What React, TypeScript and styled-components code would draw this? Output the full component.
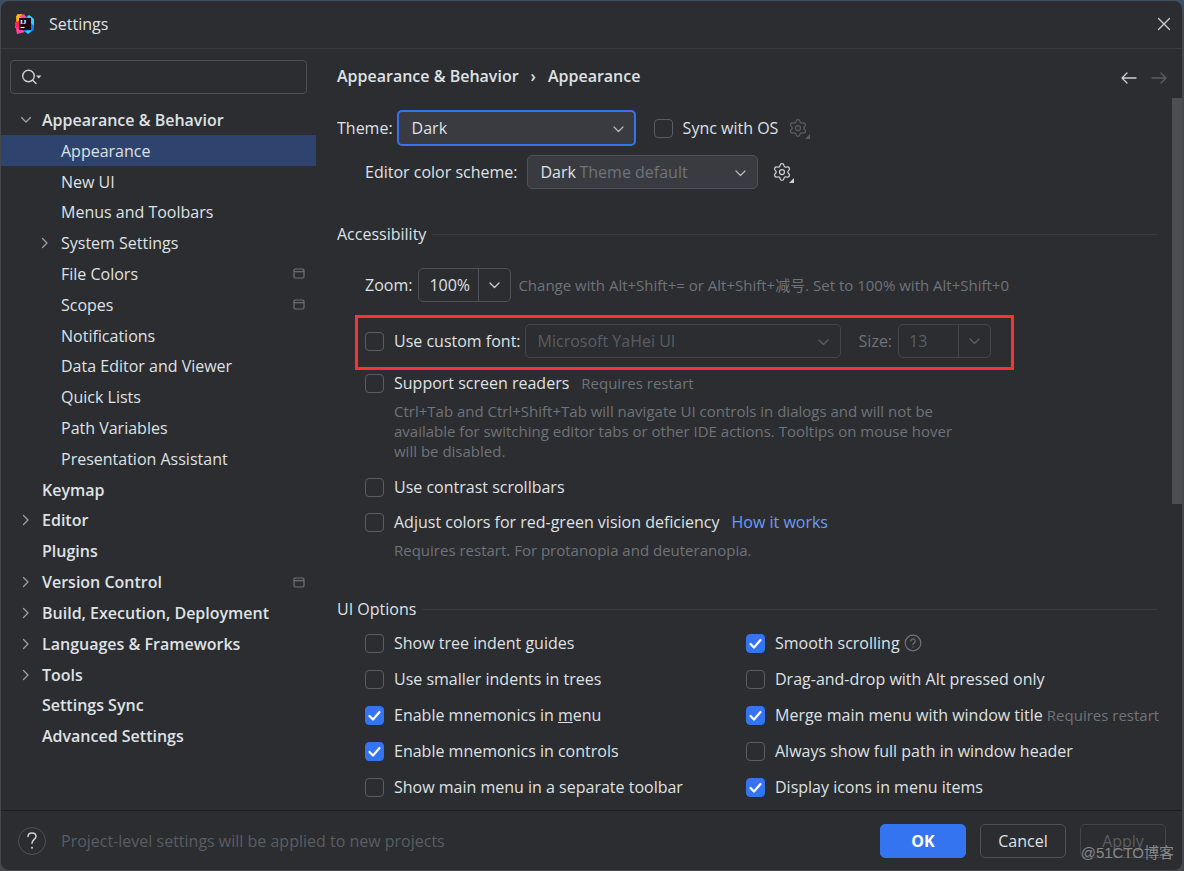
import React from "react";
import styled, { createGlobalStyle } from "styled-components";
import { Settings } from "lucide-react";

const color = {
  bg: "#2b2d30",
  field: "#393b40",
  line: "#393b40",
  border: "#4e5157",
  borderDisabled: "#43454a",
  text: "#dfe1e5",
  icon: "#ced0d6",
  dim: "#6f737a",
  disabled: "#5a5d63",
  accent: "#3574f0",
  link: "#6b9bfa",
  selection: "#2e436e",
  mark: "#fa3232",
};

const GlobalStyle = createGlobalStyle`
  *, *::before, *::after { box-sizing: border-box; }
  body {
    margin: 0;
    background: linear-gradient(#3c5064, #45474b 24px);
    color: ${color.text};
    font: 16px/24px "Open Sans", "Noto Sans CJK SC", sans-serif;
  }
  button, input, select { font: inherit; color: inherit; margin: 0; }
  svg { display: block; flex: none; }
`;

const Desktop = styled.div`
  height: 100vh;
  padding: 1px 2px 1px 1px;
`;

const Dialog = styled.div`
  display: flex;
  flex-direction: column;
  height: 100%;
  background: ${color.bg};
  border-radius: 8px;
  overflow: hidden;
  white-space: nowrap;
`;

const TitleBar = styled.header`
  display: flex;
  flex: none;
  align-items: center;
  gap: 14px;
  height: 48px;
  padding: 0 11px 2px 14px;
  border-bottom: 1px solid ${color.line};
`;

const Title = styled.h1`
  flex: 1;
  margin: 0;
  font-size: 16px;
  font-weight: 400;
`;

const IconButton = styled.button`
  display: grid;
  place-items: center;
  padding: 0;
  border: 0;
  background: none;
  color: ${color.icon};
  &:disabled { color: ${color.disabled}; }
`;

const Main = styled.div`
  display: flex;
  flex: 1;
  min-height: 0;
`;

const Sidebar = styled.nav`
  display: flex;
  flex: none;
  flex-direction: column;
  width: 315px;
  padding-bottom: 59px;
`;

const SearchBox = styled.label`
  display: flex;
  flex: none;
  align-items: center;
  gap: 8px;
  height: 34px;
  margin: 11px 9px 10px;
  padding: 0 10px;
  border: 1px solid ${color.border};
  border-radius: 4px;
  color: ${color.icon};
`;

const BareInput = styled.input`
  flex: 1;
  min-width: 0;
  padding: 0;
  border: 0;
  outline: 0;
  background: none;
`;

const Tree = styled.ul`
  display: flex;
  flex: 1;
  flex-direction: column;
  min-height: 0;
  margin: 0;
  padding: 0;
  list-style: none;
`;

const TreeRow = styled.li<{ $level: number; $selected?: boolean }>`
  display: flex;
  flex: 0 1 31px;
  align-items: center;
  min-height: 24px;
  padding: 1px 11px 0 ${(p) => (p.$level ? 34 : 15)}px;
  font-weight: ${(p) => (p.$level ? 400 : 600)};
  background: ${(p) => (p.$selected ? color.selection : "transparent")};
`;

const Twisty = styled.span`
  width: 26px;
  color: #9da0a8;
`;

const TreeLabel = styled.span`
  flex: 1;
`;

const Page = styled.main`
  display: flex;
  flex: 1;
  flex-direction: column;
  min-width: 0;
  padding-left: 21px;
`;

const PageHeader = styled.div`
  display: flex;
  flex: none;
  align-items: center;
  gap: 10px;
  height: 49px;
  padding: 8px 13px 0 0;
`;

const Crumbs = styled.div`
  display: flex;
  flex: 1;
  gap: 12px;
  padding-bottom: 4px;
  font-weight: 600;
`;

const Scroller = styled.div`
  display: flex;
  flex: 1;
  min-height: 0;
  overflow: hidden;
`;

const Content = styled.div`
  flex: 1;
  min-width: 0;
  margin-right: 15px;
  padding-top: 12px;
`;

const Thumb = styled.div`
  width: 10px;
  height: 57%;
  background: #4d4e51;
`;

const Row = styled.div<{ $top?: number; $indent?: number }>`
  display: flex;
  align-items: center;
  margin-top: ${(p) => p.$top ?? 0}px;
  padding-left: ${(p) => p.$indent ?? 0}px;
`;

const Highlight = styled.div`
  display: flex;
  align-items: center;
  width: 659px;
  height: 55px;
  margin: 13px 0 0 18px;
  padding: 0 0 3px 7px;
  border: 3px solid ${color.mark};
`;

const SectionTitle = styled.h2<{ $top: number }>`
  display: flex;
  align-items: center;
  gap: 6px;
  margin: ${(p) => p.$top}px 0 0;
  font-size: 16px;
  font-weight: 400;
  &::after {
    content: "";
    flex: 1;
    height: 1px;
    background: ${color.line};
  }
`;

const FieldLabel = styled.label<{ $disabled?: boolean; $gap: number }>`
  margin-right: ${(p) => p.$gap}px;
  color: ${(p) => (p.$disabled ? color.dim : color.text)};
`;

const SelectBox = styled.div<{ $width: number }>`
  position: relative;
  width: ${(p) => p.$width}px;
  color: ${color.text};
`;

const SelectInput = styled.select<{ $focused?: boolean }>`
  display: block;
  width: 100%;
  height: ${(p) => (p.$focused ? 36 : 34)}px;
  padding: 0 36px 0 ${(p) => (p.$focused ? 13 : 12)}px;
  border: ${(p) => (p.$focused ? `2px solid ${color.accent}` : `1px solid ${color.border}`)};
  border-radius: 5px;
  outline: 0;
  appearance: none;
  background: ${color.field};
  &:disabled {
    border-color: ${color.borderDisabled};
    background: none;
    color: ${color.disabled};
    opacity: 1;
  }
`;

const SelectArrow = styled.span<{ $disabled?: boolean }>`
  position: absolute;
  top: 50%;
  right: 11px;
  margin-top: -5px;
  color: ${(p) => (p.$disabled ? color.disabled : "#b4b8bf")};
  pointer-events: none;
`;

const SelectHint = styled.span`
  position: absolute;
  top: 5px;
  left: 52px;
  color: ${color.dim};
  pointer-events: none;
`;

const Combo = styled.div<{ $disabled?: boolean }>`
  display: flex;
  width: 93px;
  height: 34px;
  border: 1px solid ${(p) => (p.$disabled ? color.borderDisabled : color.border)};
  border-radius: 5px;
  color: ${(p) => (p.$disabled ? color.disabled : color.text)};
  ${BareInput} { padding-left: 10px; }
  ${IconButton} {
    width: 32px;
    border-left: 1px solid ${(p) => (p.$disabled ? color.borderDisabled : color.border)};
  }
`;

const CheckLabel = styled.label`
  display: flex;
  align-items: center;
  gap: 10px;
`;

const CheckFrame = styled.span`
  display: grid;
  place-items: center;
  width: 19px;
  height: 19px;
  > * { grid-area: 1 / 1; }
  svg { pointer-events: none; }
`;

const CheckInput = styled.input`
  width: 19px;
  height: 19px;
  border: 1px solid #5a5d63;
  border-radius: 4px;
  appearance: none;
  &:checked { border-color: ${color.accent}; background: ${color.accent}; }
`;

const Note = styled.span<{ $gap: number }>`
  margin-left: ${(p) => p.$gap}px;
  color: ${color.dim};
  font-size: 15px;
`;

const HelpText = styled.p`
  margin: 6px 0 0 57px;
  max-width: 565px;
  color: ${color.dim};
  font-size: 15px;
  line-height: 20px;
  white-space: normal;
`;

const Link = styled.a`
  margin-left: 12px;
  color: ${color.link};
  text-decoration: none;
`;

const OptionGrid = styled.div`
  display: grid;
  grid-template-columns: 381px 1fr;
  row-gap: 12px;
  margin: 10px 0 0 28px;
`;

const GearButton = styled(IconButton)<{ $gap: number }>`
  position: relative;
  margin-left: ${(p) => p.$gap}px;
  &::after {
    content: "";
    position: absolute;
    right: -2px;
    bottom: -1px;
    border-left: 5px solid transparent;
    border-bottom: 5px solid currentColor;
  }
`;

const Footer = styled.footer`
  position: relative;
  display: flex;
  flex: none;
  align-items: center;
  gap: 14px;
  height: 60px;
  padding: 0 16px 0 17px;
  border-top: 1px solid #1e1f22;
`;

const HelpButton = styled(IconButton)`
  width: 28px;
  height: 28px;
  border: 1px solid ${color.border};
  border-radius: 50%;
`;

const FooterNote = styled.span`
  flex: 1;
  margin-left: 1px;
  color: ${color.disabled};
`;

const Button = styled.button<{ $primary?: boolean }>`
  width: 86px;
  height: 34px;
  padding: 0;
  border: 1px solid ${(p) => (p.$primary ? color.accent : color.border)};
  border-radius: 5px;
  background: ${(p) => (p.$primary ? color.accent : "none")};
  color: ${(p) => (p.$primary ? "#fff" : color.text)};
  font-weight: ${(p) => (p.$primary ? 700 : 400)};
  &:disabled { border-color: ${color.borderDisabled}; color: ${color.disabled}; }
`;

const Watermark = styled.span`
  position: absolute;
  right: 8px;
  bottom: 5px;
  color: #87898c;
  font: 15px/24px "Liberation Sans", "Noto Sans CJK SC", sans-serif;
  pointer-events: none;
`;

const Stroke = ({ d, w, h, sw = 1.3 }: { d: string; w: number; h: number; sw?: number }) => (
  <svg width={w} height={h} viewBox={`0 0 ${w} ${h}`} fill="none" stroke="currentColor" strokeWidth={sw} strokeLinecap="round" strokeLinejoin="round">
    <path d={d} />
  </svg>
);

const ChevronDown = () => <Stroke w={13} h={12} d="M2 4l4.5 4.5L11 4" />;
const ChevronRight = () => <Stroke w={19} h={12} d="M7.5 1.5L12 6l-4.5 4.5" />;
const TreeOpen = () => <Stroke w={19} h={12} d="M5.5 3.5L10 8l4.5-4.5" />;

const ProjectIcon = () => (
  <svg width="12" height="11" viewBox="0 0 12 11" fill="none" stroke={color.dim} strokeWidth="1.2">
    <rect x="1" y="1" width="10" height="9" rx="1.5" />
    <path d="M1 3.7h10" />
  </svg>
);

const Logo = () => (
  <svg width="20" height="20" viewBox="0 0 20 20" aria-hidden="true">
    <path d="M2 0h5l3 4-4 8-6 2 1-7z" fill="#fc801d" />
    <path d="M1 2l5-2 1 4-5 4z" fill="#fdb60d" />
    <path d="M5 2l4-2 3 4-5 2z" fill="#ff45a0" />
    <path d="M0 8l4-1 4 10-6 2-1-5z" fill="#fe2857" />
    <path d="M1 14l6 1 3 3-8 2z" fill="#ff45a0" />
    <path d="M11 3l3-2 5 4v11l-6 4-4-3z" fill="#087cfa" />
    <path d="M14 1l5 4v7l-4-4-3-5z" fill="#21d7fd" />
    <path d="M10 17l7-1-4 4z" fill="#21d7fd" />
    <rect x="4" y="4" width="12" height="12" fill="#190a12" />
    <text x="5" y="10" fill="#fff" fontFamily="Liberation Serif" fontWeight="700" fontSize="7">IJ</text>
    <rect x="5.5" y="13" width="4" height="1" fill="#fff" />
  </svg>
);

const HelpIcon = () => (
  <svg width="12" height="20" viewBox="0 0 12 20" fill="none" stroke="currentColor" strokeWidth="1.5" strokeLinecap="round">
    <path d="M2 5.6C2 3.3 3.7 2 6 2s4 1.3 4 3.5C10 8.3 6 8.7 6 12.3" />
    <circle cx="6" cy="16.7" r="1" fill="currentColor" stroke="none" />
  </svg>
);

const QuestionIcon = () => (
  <svg width="18" height="18" viewBox="0 0 18 18" fill="none" stroke={color.dim} strokeWidth="1.2" strokeLinecap="round">
    <circle cx="9" cy="9" r="7.8" />
    <path d="M6.8 7.2a2.2 2.2 0 1 1 3.4 1.8C9.4 9.5 9 9.8 9 10.600M9 12.800v.2" />
  </svg>
);

const Check = ({ checked, children }: { checked?: boolean; children: React.ReactNode }) => (
  <CheckLabel>
    <CheckFrame>
      <CheckInput type="checkbox" defaultChecked={checked} />
      {checked && (
        <svg width="19" height="19" viewBox="0 0 19 19" fill="none" stroke="#fff" strokeWidth="2.2" strokeLinecap="round" strokeLinejoin="round">
          <path d="M4.5 10l3.5 3.500L14.500 6" />
        </svg>
      )}
    </CheckFrame>
    <span>{children}</span>
  </CheckLabel>
);

type Node = { label: string; level?: number; state?: "open" | "closed"; project?: boolean; selected?: boolean };

const nodes: Node[] = [
  { label: "Appearance & Behavior", state: "open" },
  { label: "Appearance", level: 1, selected: true },
  { label: "New UI", level: 1 },
  { label: "Menus and Toolbars", level: 1 },
  { label: "System Settings", level: 1, state: "closed" },
  { label: "File Colors", level: 1, project: true },
  { label: "Scopes", level: 1, project: true },
  { label: "Notifications", level: 1 },
  { label: "Data Editor and Viewer", level: 1 },
  { label: "Quick Lists", level: 1 },
  { label: "Path Variables", level: 1 },
  { label: "Presentation Assistant", level: 1 },
  { label: "Keymap" },
  { label: "Editor", state: "closed" },
  { label: "Plugins" },
  { label: "Version Control", state: "closed", project: true },
  { label: "Build, Execution, Deployment", state: "closed" },
  { label: "Languages & Frameworks", state: "closed" },
  { label: "Tools", state: "closed" },
  { label: "Settings Sync" },
  { label: "Advanced Settings" },
];

export default function App() {
  return (
    <Desktop>
      <GlobalStyle />
      <Dialog role="dialog" aria-label="Settings">
        <TitleBar>
          <Logo />
          <Title>Settings</Title>
          <IconButton aria-label="Close">
            <Stroke w={14} h={14} d="M1.5 1.5l11 11M12.5 1.5l-11 11" />
          </IconButton>
        </TitleBar>
        <Main>
          <Sidebar>
            <SearchBox>
              <svg width="22" height="16" viewBox="0 0 22 16" fill="none" stroke="currentColor" strokeWidth="1.4" strokeLinecap="round">
                <circle cx="7.5" cy="7" r="5.8" />
                <path d="M11.7 11.2L15 14.5" />
                <path d="M15 6.500h5.500L17.800 9.500z" fill="currentColor" stroke="none" />
              </svg>
              <BareInput type="text" aria-label="Search settings" />
            </SearchBox>
            <Tree>
              {nodes.map((n) => (
                <TreeRow key={n.label} $level={n.level ?? 0} $selected={n.selected}>
                  <Twisty>
                    {n.state === "open" && <TreeOpen />}
                    {n.state === "closed" && <ChevronRight />}
                  </Twisty>
                  <TreeLabel>{n.label}</TreeLabel>
                  {n.project && <ProjectIcon />}
                </TreeRow>
              ))}
            </Tree>
          </Sidebar>
          <Page>
            <PageHeader>
              <Crumbs>
                <span>Appearance &amp; Behavior</span>
                <span>›</span>
                <span>Appearance</span>
              </Crumbs>
              <IconButton aria-label="Back">
                <Stroke w={20} h={14} d="M17 7H3.500M8 2L3 7l5 5" />
              </IconButton>
              <IconButton aria-label="Forward" disabled>
                <Stroke w={20} h={14} d="M3 7h13.500M12 2l5 5-5 5" />
              </IconButton>
            </PageHeader>
            <Scroller>
              <Content>
                <Row>
                  <FieldLabel htmlFor="theme" $gap={4}>Theme:</FieldLabel>
                  <SelectBox $width={239}>
                    <SelectInput id="theme" $focused>
                      <option>Dark</option>
                    </SelectInput>
                    <SelectArrow><ChevronDown /></SelectArrow>
                  </SelectBox>
                  <Row $indent={18}>
                    <Check>Sync with OS</Check>
                    <GearButton $gap={10} aria-label="Sync options" disabled>
                      <Settings size={20} strokeWidth={1.5} />
                    </GearButton>
                  </Row>
                </Row>
                <Row $top={9} $indent={28}>
                  <FieldLabel htmlFor="scheme" $gap={10}>Editor color scheme:</FieldLabel>
                  <SelectBox $width={231}>
                    <SelectInput id="scheme">
                      <option>Dark</option>
                    </SelectInput>
                    <SelectHint>Theme default</SelectHint>
                    <SelectArrow><ChevronDown /></SelectArrow>
                  </SelectBox>
                  <GearButton $gap={14} aria-label="Scheme options">
                    <Settings size={20} strokeWidth={1.5} />
                  </GearButton>
                </Row>

                <SectionTitle $top={33}>Accessibility</SectionTitle>
                <Row $top={22} $indent={28}>
                  <FieldLabel htmlFor="zoom" $gap={6}>Zoom:</FieldLabel>
                  <Combo>
                    <BareInput id="zoom" defaultValue="100%" />
                    <IconButton aria-label="Zoom levels"><ChevronDown /></IconButton>
                  </Combo>
                  <Note $gap={7}>Change with Alt+Shift+= or Alt+Shift+减号. Set to 100% with Alt+Shift+0</Note>
                </Row>
                <Highlight>
                  <Check>Use custom font:</Check>
                  <Row $indent={4}>
                    <SelectBox $width={316}>
                      <SelectInput aria-label="Custom font" disabled>
                        <option>Microsoft YaHei UI</option>
                      </SelectInput>
                      <SelectArrow $disabled><ChevronDown /></SelectArrow>
                    </SelectBox>
                  </Row>
                  <Row $indent={18}>
                    <FieldLabel htmlFor="size" $gap={6} $disabled>Size:</FieldLabel>
                    <Combo $disabled>
                      <BareInput id="size" defaultValue="13" disabled />
                      <IconButton aria-label="Font sizes" disabled><ChevronDown /></IconButton>
                    </Combo>
                  </Row>
                </Highlight>
                <Row $top={1} $indent={28}>
                  <Check>Support screen readers</Check>
                  <Note $gap={12}>Requires restart</Note>
                </Row>
                <HelpText>
                  Ctrl+Tab and Ctrl+Shift+Tab will navigate UI controls in dialogs and will not be available for
                  switching editor tabs or other IDE actions. Tooltips on mouse hover will be disabled.
                </HelpText>
                <Row $top={14} $indent={28}>
                  <Check>Use contrast scrollbars</Check>
                </Row>
                <Row $top={11} $indent={28}>
                  <Check>Adjust colors for red-green vision deficiency</Check>
                  <Link href="#how-it-works">How it works</Link>
                </Row>
                <HelpText>Requires restart. For protanopia and deuteranopia.</HelpText>

                <SectionTitle $top={37}>UI Options</SectionTitle>
                <OptionGrid>
                  <Check>Show tree indent guides</Check>
                  <Row>
                    <Check checked>Smooth scrolling</Check>
                    <Row $indent={4}><QuestionIcon /></Row>
                  </Row>
                  <Check>Use smaller indents in trees</Check>
                  <Check>Drag-and-drop with Alt pressed only</Check>
                  <Check checked>Enable mnemonics in <u>m</u>enu</Check>
                  <Row>
                    <Check checked>Merge main menu with window title</Check>
                    <Note $gap={4}>Requires restart</Note>
                  </Row>
                  <Check checked>Enable mnemonics in controls</Check>
                  <Check>Always show full path in window header</Check>
                  <Check>Show main menu in a separate toolbar</Check>
                  <Check checked>Display icons in menu items</Check>
                </OptionGrid>
              </Content>
              <Thumb />
            </Scroller>
          </Page>
        </Main>
        <Footer>
          <HelpButton aria-label="Help"><HelpIcon /></HelpButton>
          <FooterNote>Project-level settings will be applied to new projects</FooterNote>
          <Button $primary>OK</Button>
          <Button>Cancel</Button>
          <Button disabled>Apply</Button>
          <Watermark>@51CTO博客</Watermark>
        </Footer>
      </Dialog>
    </Desktop>
  );
}
